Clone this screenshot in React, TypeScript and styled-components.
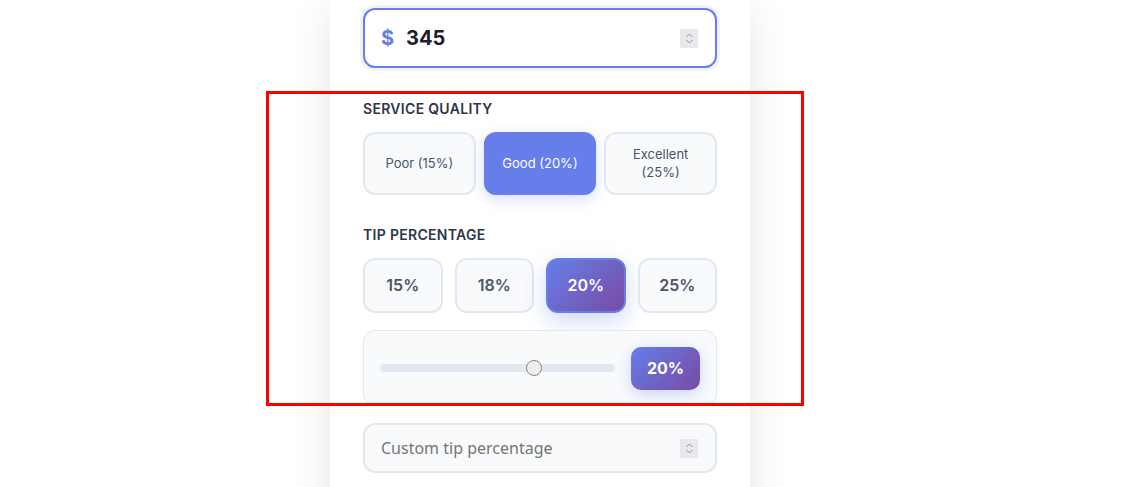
import React from "react";
import styled, { createGlobalStyle } from "styled-components";

const Global = createGlobalStyle`
  html, body { margin: 0; padding: 0; background: #ffffff; }
  body { font-family: Inter, "Noto Sans", sans-serif; overflow: hidden; }
  * { box-sizing: border-box; }
  input[type="number"]::-webkit-inner-spin-button,
  input[type="number"]::-webkit-outer-spin-button {
    -webkit-appearance: none;
    margin: 0;
  }
  input[type="number"] { -moz-appearance: textfield; }
`;

const Page = styled.div`
  position: relative;
  width: 1125px;
  height: 487px;
  overflow: hidden;
  background: #ffffff;
`;

const Card = styled.div`
  margin-left: 330px;
  width: 420px;
  height: 520px;
  background: #ffffff;
  box-shadow: 0 10px 40px rgba(0, 0, 0, 0.1);
  padding: 8px 33px 0 33px;
  display: flex;
  flex-direction: column;
`;

const AmountBox = styled.label`
  display: flex;
  align-items: center;
  gap: 12px;
  height: 60px;
  padding: 0 17px 0 16px;
  border: 2px solid #667eea;
  border-radius: 12px;
  background: #ffffff;
  box-shadow: 0 0 0 3px rgba(102, 126, 234, 0.1);
`;

const Dollar = styled.span`
  color: #667eea;
  font-weight: 700;
  font-size: 20px;
  font-family: Inter, sans-serif;
`;

const AmountInput = styled.input`
  flex: 1;
  min-width: 0;
  border: none;
  outline: none;
  background: transparent;
  font-family: Inter, sans-serif;
  font-weight: 700;
  font-size: 20px;
  color: #1a202c;
  padding: 0;
`;

const SpinBox = styled.span`
  flex: none;
  width: 18px;
  height: 19px;
  background: #e9e9ed;
  display: flex;
  align-items: center;
  justify-content: center;
`;

const Spinner = () => (
  <SpinBox>
    <svg width="9" height="13" viewBox="0 0 9 13" fill="none" stroke="#909090" strokeWidth="1">
      <path d="M1.5 5 L4.5 2 L7.5 5" />
      <path d="M1.5 8 L4.5 11 L7.5 8" />
    </svg>
  </SpinBox>
);

const Section = styled.div<{ $top: number }>`
  margin-top: ${(p) => p.$top}px;
  display: flex;
  flex-direction: column;
`;

const Label = styled.div`
  font-family: Inter, sans-serif;
  font-size: 14px;
  font-weight: 600;
  letter-spacing: 0.3px;
  line-height: 17px;
  color: #2d3748;
  text-transform: uppercase;
  margin-bottom: 15px;
`;

const Grid = styled.div<{ $cols: number; $gap: number }>`
  display: grid;
  grid-template-columns: repeat(${(p) => p.$cols}, 1fr);
  gap: ${(p) => p.$gap}px;
`;

const QualityButton = styled.button<{ $active?: boolean }>`
  font-family: Inter, sans-serif;
  font-size: 13px;
  line-height: 17.5px;
  min-height: 63px;
  padding: 12px 8px;
  border-radius: 12px;
  border: 2px solid ${(p) => (p.$active ? "#667eea" : "#e2e8f0")};
  background: ${(p) => (p.$active ? "#667eea" : "#f8fafc")};
  color: ${(p) => (p.$active ? "#ffffff" : "#4a5568")};
  box-shadow: ${(p) => (p.$active ? "0 4px 14px rgba(102, 126, 234, 0.25)" : "none")};
  text-align: center;
`;

const TipButton = styled.button<{ $active?: boolean }>`
  font-family: Inter, sans-serif;
  font-size: 16px;
  font-weight: 600;
  line-height: 19px;
  height: 55px;
  padding: 0;
  border-radius: 12px;
  border: 2px solid ${(p) => (p.$active ? "#667eea" : "#e2e8f0")};
  background: ${(p) =>
    p.$active ? "linear-gradient(135deg, #667eea 0%, #764ba2 100%)" : "#f8fafc"};
  color: ${(p) => (p.$active ? "#ffffff" : "#4a5568")};
  box-shadow: ${(p) => (p.$active ? "0 8px 22px rgba(102, 126, 234, 0.3)" : "none")};
`;

const SliderBox = styled.div`
  margin-top: 17px;
  display: flex;
  align-items: center;
  gap: 16px;
  padding: 16px;
  height: 76px;
  border: 1px solid #e2e8f0;
  border-radius: 12px;
  background: #f8fafc;
`;

const Range = styled.input`
  flex: 1;
  min-width: 0;
  margin: 0;
  height: 8px;
  -webkit-appearance: none;
  appearance: none;
  background: #e2e8f0;
  border-radius: 4px;
  outline: none;

  &::-webkit-slider-thumb {
    -webkit-appearance: none;
    appearance: none;
    width: 16px;
    height: 16px;
    border-radius: 50%;
    background: #efefef;
    border: 1px solid #858585;
  }
`;

const Badge = styled.div`
  font-family: Inter, sans-serif;
  font-size: 16px;
  font-weight: 700;
  line-height: 19px;
  padding: 12px 16px;
  border-radius: 10px;
  color: #ffffff;
  background: linear-gradient(135deg, #667eea 0%, #764ba2 100%);
  box-shadow: 0 4px 14px rgba(102, 126, 234, 0.3);
`;

const CustomBox = styled.label`
  margin-top: 17px;
  display: flex;
  align-items: center;
  gap: 8px;
  height: 50px;
  padding: 0 17px 0 16px;
  border: 2px solid #e2e8f0;
  border-radius: 12px;
  background: #f8fafc;
`;

const CustomInput = styled.input`
  flex: 1;
  min-width: 0;
  font-family: "Noto Sans", sans-serif;
  font-size: 16px;
  line-height: 21px;
  padding: 0;
  border: none;
  background: transparent;
  color: #2d3748;
  outline: none;

  &::placeholder {
    color: #757575;
  }
`;

const Highlight = styled.div`
  position: absolute;
  left: 266px;
  top: 91px;
  width: 538px;
  height: 315px;
  border: 3px solid #ff0000;
  pointer-events: none;
`;

const qualities = [
  { label: "Poor (15%)", active: false },
  { label: "Good (20%)", active: true },
  { label: "Excellent (25%)", active: false },
];

const tips = [15, 18, 20, 25];

export default function App() {
  return (
    <>
      <Global />
      <Page>
        <Card>
          <AmountBox>
            <Dollar>$</Dollar>
            <AmountInput type="number" defaultValue={345} />
            <Spinner />
          </AmountBox>

          <Section $top={32}>
            <Label>Service Quality</Label>
            <Grid $cols={3} $gap={8}>
              {qualities.map((q) => (
                <QualityButton key={q.label} $active={q.active}>
                  {q.label}
                </QualityButton>
              ))}
            </Grid>
          </Section>

          <Section $top={31}>
            <Label>Tip Percentage</Label>
            <Grid $cols={4} $gap={12}>
              {tips.map((t) => (
                <TipButton key={t} $active={t === 20}>
                  {t}%
                </TipButton>
              ))}
            </Grid>
            <SliderBox>
              <Range type="range" min={0} max={30} defaultValue={20} />
              <Badge>20%</Badge>
            </SliderBox>
            <CustomBox>
              <CustomInput type="number" placeholder="Custom tip percentage" />
              <Spinner />
            </CustomBox>
          </Section>
        </Card>
        <Highlight />
      </Page>
    </>
  );
}
